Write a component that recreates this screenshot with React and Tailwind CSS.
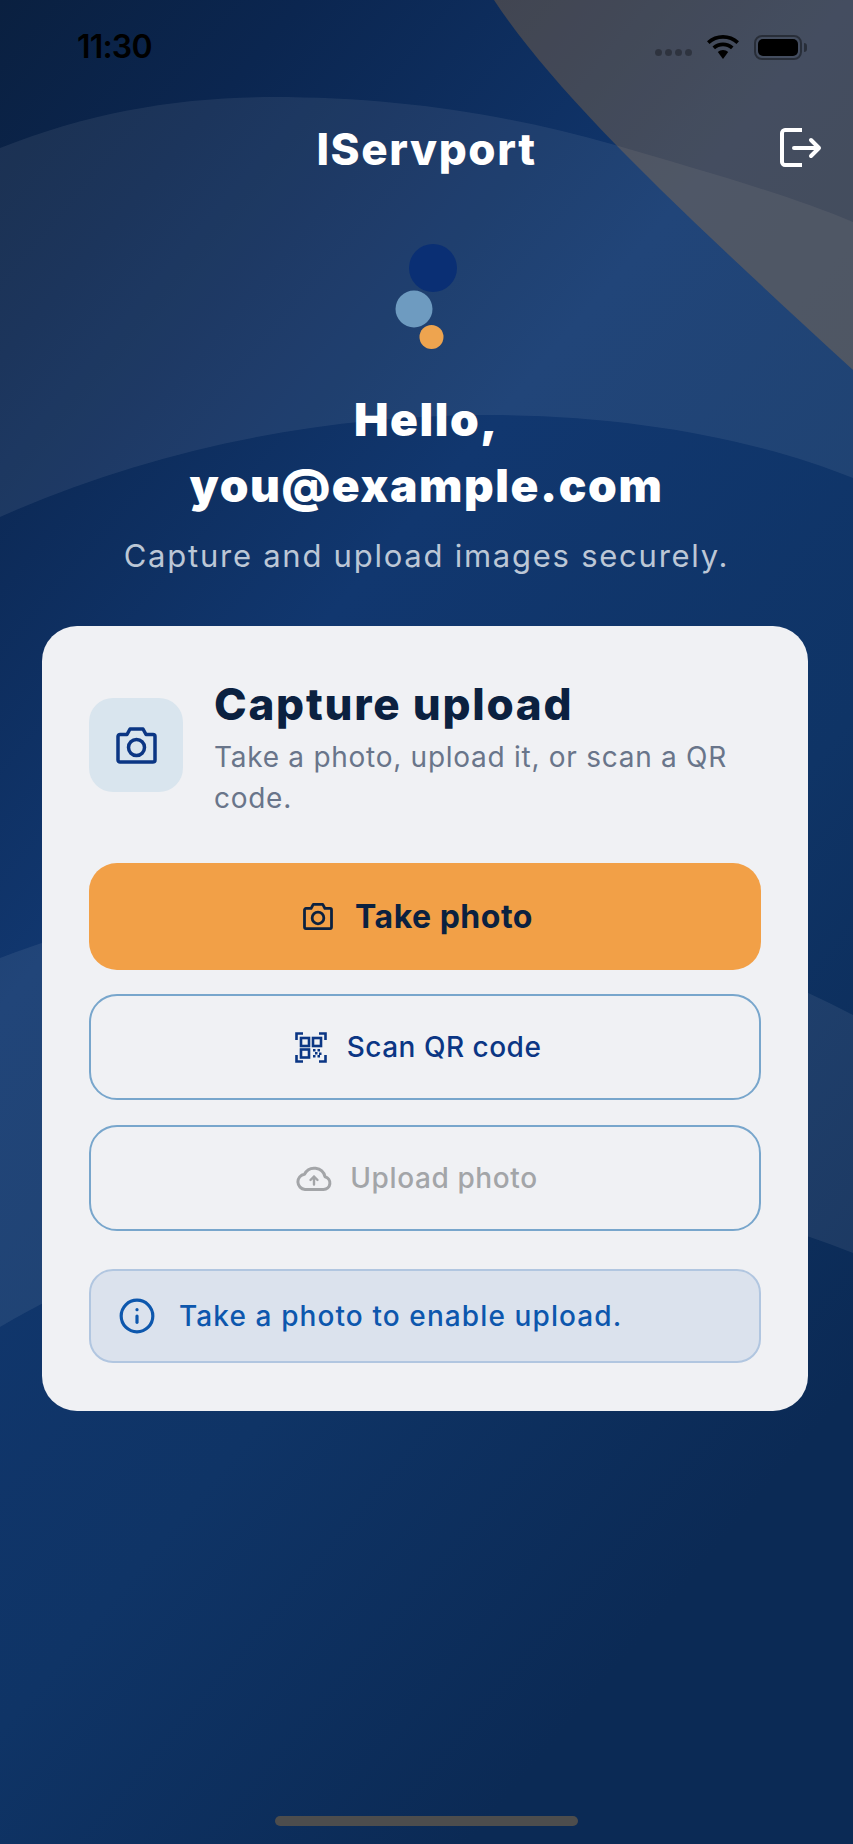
import React from 'react';
import { Info } from 'lucide-react';

const Background = () => (
    <svg className="absolute inset-0 w-full h-full" viewBox="0 0 853 1844" preserveAspectRatio="none">
        <defs>
            <linearGradient id="base" x1="0" y1="0" x2="0.55" y2="1">
                <stop offset="0" stopColor="#0a2040" />
                <stop offset="0.15" stopColor="#0b2650" />
                <stop offset="0.42" stopColor="#11376f" />
                <stop offset="0.72" stopColor="#0f3466" />
                <stop offset="1" stopColor="#0b2a55" />
            </linearGradient>
        </defs>
        <rect width="853" height="1844" fill="url(#base)" />
        {/* top band */}
        <path d="M0 148C90 112 180 97 272 97C400 97 510 115 615 145C700 170 790 195 853 222V478C760 440 630 415 490 415C320 415 150 450 0 517Z" fill="#ffffff" fillOpacity="0.07" />
        {/* band behind the card */}
        <path d="M0 958C250 860 600 880 853 1015V1253C600 1150 250 1180 0 1327Z" fill="#ffffff" fillOpacity="0.07" />
        {/* corner */}
        <path d="M494 0C560 100 690 220 853 370V0Z" fill="#c9873a" fillOpacity="0.28" />
    </svg>
);

const CameraIcon = ({ width, height, strokeWidth = 3.5 }) => (
    <svg width={width} height={height} viewBox="0 0 41 37" fill="none" stroke="currentColor" strokeWidth={strokeWidth} strokeLinejoin="round">
        <path d="M4 7.500h7l3-5.500h13l3 5.500h7a2 2 0 0 1 2 2V33a2 2 0 0 1-2 2H4a2 2 0 0 1-2-2V9.500a2 2 0 0 1 2-2z" />
        <circle cx="20.500" cy="20.500" r="8" />
    </svg>
);

const QrIcon = () => (
    <svg width="32" height="31" viewBox="0 0 32 31" fill="none" stroke="#0b3684" strokeWidth="2.600">
        <path d="M1.500 8V1.500H8M24 1.500H30.500V8M1.500 23V29.500H8M24 29.500H30.500V23" />
        <rect x="6" y="6" width="8" height="8" />
        <rect x="18" y="6" width="8" height="8" />
        <rect x="6" y="17.500" width="8" height="8" />
        <path d="M18 17h2.500v2.500H18zM22.500 17H25v2.500h-2.500zM20 20h2.500v2.500H20zM24 20.500h2.500V23H24zM18 23h2.500v2.500H18zM22.500 23H25v2.500h-2.500z" fill="#0b3684" stroke="none" />
    </svg>
);

const CloudIcon = () => (
    <svg width="36" height="26" viewBox="0 0 36 26" fill="none" stroke="currentColor" strokeWidth="3" strokeLinejoin="round" strokeLinecap="round">
        <path d="M9 24.500H27.500a6.500 6.500 0 0 0 1.500-12.800A11 11 0 0 0 8.500 9.200 7.700 7.700 0 0 0 9 24.500Z" />
        <path d="M18 19.500V11.500M14.500 15L18 11.500L21.500 15" strokeWidth="2.400" />
    </svg>
);

const App = () => {
    return (
        <div className="relative w-[853px] h-[1844px] overflow-hidden font-['Inter',sans-serif]">
            <Background />
            <div className="relative flex flex-col h-full">
                {/* status bar */}
                <div className="flex items-center justify-between h-[94px] pl-[77px] pr-[46px]">
                    <span className="text-[32px] font-semibold text-black tracking-tight">11:30</span>
                    <div className="flex items-center gap-[15px]">
                        <div className="flex gap-[3px] mt-[10px]">
                            <span className="w-[7px] h-[7px] rounded-full bg-black/30" />
                            <span className="w-[7px] h-[7px] rounded-full bg-black/30" />
                            <span className="w-[7px] h-[7px] rounded-full bg-black/30" />
                            <span className="w-[7px] h-[7px] rounded-full bg-black/30" />
                        </div>
                        <svg width="32" height="24" viewBox="0 0 32 24" fill="#000">
                            <path d="M16 0C10 0 4.500 2.200 0 6.200L2.500 9C6.200 5.700 11 3.800 16 3.800S25.800 5.700 29.500 9L32 6.200C27.500 2.200 22 0 16 0Z" />
                            <path d="M16 7.500C12 7.500 8.400 9 5.500 11.500L8 14.300C10.200 12.400 13 11.300 16 11.300S21.800 12.400 24 14.300L26.500 11.500C23.600 9 20 7.500 16 7.500Z" />
                            <path d="M16 15C14 15 12.200 15.700 10.800 17L16 24L21.200 17C19.800 15.700 18 15 16 15Z" />
                        </svg>
                        <div className="flex items-center gap-[2px]">
                            <div className="w-[48px] h-[25px] rounded-[8px] border-2 border-black/40 p-[2px]">
                                <div className="w-full h-full rounded-[5px] bg-black" />
                            </div>
                            <div className="w-[3px] h-[9px] rounded-r-full bg-black/40" />
                        </div>
                    </div>
                </div>

                {/* header */}
                <div className="relative flex items-center justify-center h-[56px] mt-[27px]">
                    <span className="text-[44px] font-extrabold text-white tracking-[1.6px]">IServport</span>
                    <svg className="absolute right-[31px] top-[7px]" width="42" height="40" viewBox="0 0 42 40" fill="none" stroke="#fff" strokeWidth="4" strokeLinecap="round" strokeLinejoin="round">
                        <path d="M22 2H5C3.500 2 2 3.500 2 5V34C2 35.500 3.500 37 5 37H22" strokeLinecap="butt" />
                        <path d="M14 20H39M31 12L39 20L31 28" />
                    </svg>
                </div>

                {/* logo */}
                <div className="flex justify-center mt-[67px] pr-[2px]">
                    <svg width="62" height="105" viewBox="0 0 62 105">
                        <circle cx="38" cy="24" r="24" fill="#0a2f74" />
                        <circle cx="19" cy="65" r="18.500" fill="#6e9bc0" />
                        <circle cx="36.500" cy="93" r="12" fill="#eea44f" />
                    </svg>
                </div>

                {/* greeting */}
                <h1 className="mt-[37px] text-center text-[46px] leading-[66px] font-black text-white tracking-[1.6px]">
                    Hello,<br />you@example.com
                </h1>
                <p className="mt-[16px] text-center text-[31px] leading-[44px] text-[#bcc7d6] tracking-[1.75px]">Capture and upload images securely.</p>

                {/* card */}
                <div className="ml-[42px] w-[766px] mt-[48px] rounded-[35px] bg-[#f0f1f4] px-[47px] pt-[51px] pb-[48px]">
                    <div className="flex items-center gap-[31px]">
                        <div className="flex items-center justify-center w-[94px] h-[94px] mb-[6px] shrink-0 rounded-[24px] bg-[#d9e5ee] text-[#0b3684]">
                            <CameraIcon width={41} height={37} />
                        </div>
                        <div>
                            <h2 className="text-[44px] leading-[54px] font-extrabold text-[#0b2140] tracking-[1.75px]">Capture upload</h2>
                            <p className="mt-[6px] text-[28px] leading-[41px] text-[#69758a] tracking-[0.73px]">Take a photo, upload it, or scan a QR code.</p>
                        </div>
                    </div>

                    <button className="mt-[44px] flex items-center justify-center gap-[22px] w-full h-[107px] pr-[14px] rounded-[28px] bg-[#f2a047] text-[32px] font-bold text-[#0b2140] tracking-[0.5px]">
                        <CameraIcon width={30} height={27} strokeWidth={3.8} />
                        Take photo
                    </button>
                    <button className="mt-[24px] flex items-center justify-center gap-[20px] w-full h-[106px] pr-[14px] rounded-[28px] border-2 border-[#78a6cc] text-[28px] font-medium text-[#0b3684] tracking-[0.5px]">
                        <QrIcon />
                        Scan QR code
                    </button>
                    <button className="mt-[25px] flex items-center justify-center gap-[18px] w-full h-[106px] pr-[16px] rounded-[28px] border-2 border-[#78a6cc] text-[28px] font-medium text-[#a3a5a8] tracking-[0.6px]">
                        <CloudIcon />
                        Upload photo
                    </button>
                    <div className="mt-[38px] flex items-center gap-[23px] h-[94px] pl-[27px] rounded-[24px] border-2 border-[#b1c6e0] bg-[#dbe2ed] text-[28px] font-medium text-[#0d57ad] tracking-[1.1px]">
                        <Info size={38} strokeWidth={2} />
                        Take a photo to enable upload.
                    </div>
                </div>
            </div>
            <div className="absolute left-[275px] top-[1816px] w-[303px] h-[10px] rounded-full bg-[#4d4d4d]" />
        </div>
    );
};

export default App;
